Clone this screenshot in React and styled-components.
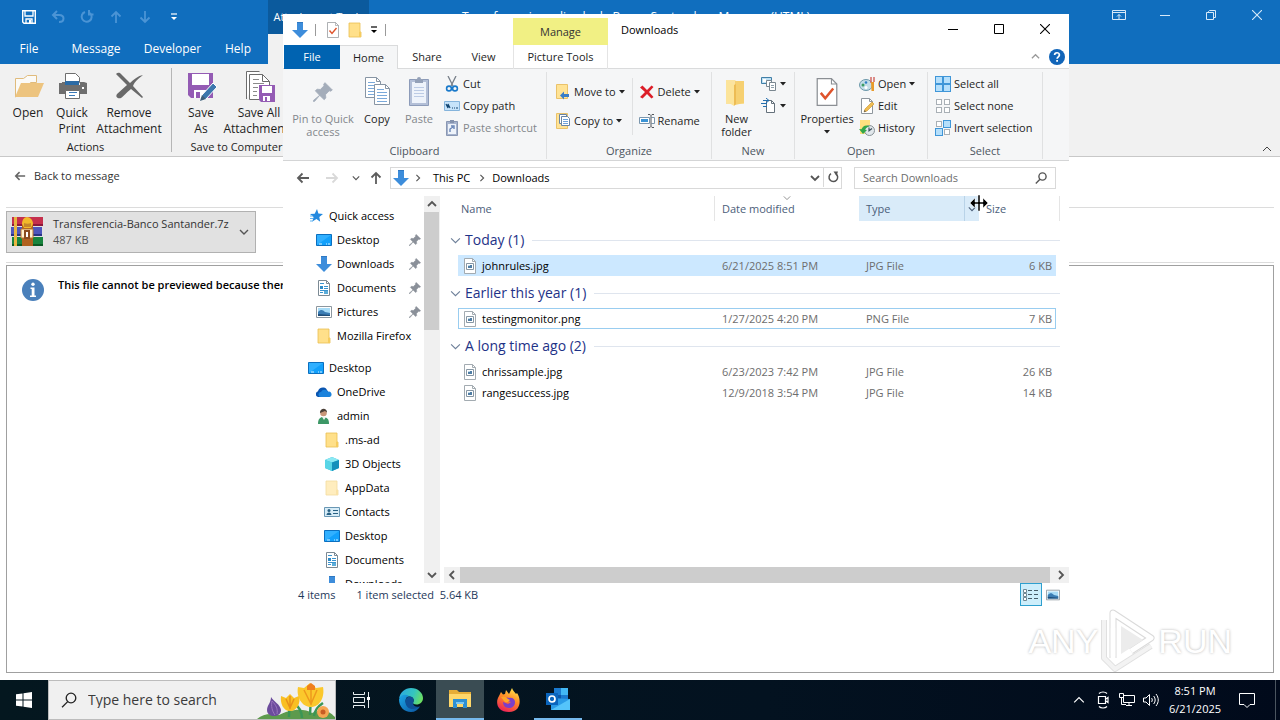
import React from "react";
import styled, { createGlobalStyle, css } from "styled-components";

const GlobalStyle = createGlobalStyle`
  *, *::before, *::after { box-sizing: border-box; }
  html, body { margin: 0; padding: 0; }
  body {
    font-family: "Open Sans", "Noto Sans", sans-serif;
    font-size: 11px;
    line-height: 16px;
    color: #1e1e1e;
    overflow: hidden;
  }
  button, input { font: inherit; color: inherit; margin: 0; padding: 0; border: 0; background: none; border-radius: 0; }
  button { cursor: default; }
  svg { display: block; flex: none; }
`;

/* ---------- icons ---------- */

const Svg = ({ w = 16, h = w, vb, children, ...rest }) => (
  <svg width={w} height={h} viewBox={vb || `0 0 ${w} ${h}`} fill="none" aria-hidden="true" {...rest}>
    {children}
  </svg>
);

const Chevron = ({ dir = "down", size = 10, color = "#555", weight = 1.4 }) => {
  const d = {
    down: "M1 3l4 4 4-4",
    up: "M1 7l4-4 4 4",
    left: "M7 1L3 5l4 4",
    right: "M3 1l4 4-4 4",
  }[dir];
  return <Svg w={size} vb="0 0 10 10"><path d={d} stroke={color} strokeWidth={weight} /></Svg>;
};
const Caret = ({ color = "#222" }) => <Svg w={6} h={4}><path d="M0 0h6L3 3.5z" fill={color} /></Svg>;
const CustomizeCaret = ({ color }) => (
  <Svg w={8} h={8}><path d="M1 1h6" stroke={color} strokeWidth="1.2" /><path d="M1 4h6L4 7z" fill={color} /></Svg>
);
const DownArrow = ({ size = 16 }) => (
  <Svg w={size} vb="0 0 16 16"><path d="M5 0h6v8h5l-8 8-8-8h5z" fill="#3d8ddb" /><path d="M5 0h6v1H5z" fill="#2f78c2" /></Svg>
);
const PinIcon = ({ size = 12, color = "#8a9099" }) => (
  <Svg w={size} vb="0 0 12 12">
    <path d="M7.2.4L11.6 4.8l-1 .7-.9-.2-2.200 2.300.2 2-1 1L4 8 1 11.600l-.7.1.1-.8L4 8 1.400 5.300l1-1 2 .2 2.200-2.200-.2-.9z" fill={color} stroke={color} strokeWidth=".5" />
  </Svg>
);
const FolderIcon = ({ size = 16, faded }) => (
  <Svg w={size} vb="0 0 16 16" opacity={faded ? 0.55 : 1}>
    <path d="M2 1h11v9h1v5H2z" fill="#ffe08a" stroke="#eabf52" strokeWidth=".8" />
    <path d="M12 10h2v5h-2z" fill="#f6cc5e" />
  </Svg>
);
const BigFolderIcon = () => (
  <Svg w={32} vb="3 0 32 32">
    <path d="M8 4h9l1 1h8v23H8z" fill="#fbe3a0" />
    <path d="M17 5h9v22l-9 2z" fill="#f6d071" />
    <path d="M8 4l8 5v21l-8-5z" fill="#fce49a" />
    <path d="M16 9v21l2-2V8z" fill="#edbc54" />
  </Svg>
);
const DesktopIcon = () => (
  <Svg><path d="M.5 2.500h15v11H.5z" fill="#12a0fb" stroke="#0b6fbf" /><path d="M1 3h14L1 13z" fill="#31b0ff" /><path d="M3 12h3M10 12h1M12 12h2" stroke="#d5f0ff" /></Svg>
);
const DocumentIcon = () => (
  <Svg>
    <path d="M2.500.5h8l3 3v12h-11z" fill="#fff" stroke="#7c8a94" /><path d="M10.500.5v3h3" stroke="#7c8a94" />
    <path d="M4 6h3v3H4z" fill="#2d8bc9" /><path d="M4 3.500h4M8 6.500h4M8 8.500h4M4 10.500h8M4 12.500h3" stroke="#3a94cf" /><path d="M8 11h4v3H8z" fill="#5cadd9" />
  </Svg>
);
const PictureIcon = ({ size = 16 }) => (
  <Svg w={size} vb="0 0 16 16">
    <path d="M.5 2.500h15v11H.5z" fill="#fff" stroke="#8c979f" /><path d="M2 4h12v8H2z" fill="#a8dcf7" />
    <path d="M2 8c3-3 5-2 7 0l5 1v3H2z" fill="#3b7db4" /><path d="M2 10l12 1v1H2z" fill="#1f4d78" />
  </Svg>
);
const ImageFileIcon = () => (
  <Svg>
    <path d="M2.500.5h8l3 3v12h-11z" fill="#fff" stroke="#a3abb1" /><path d="M10.500.5v3h3" stroke="#a3abb1" />
    <path d="M4.500 5.500h7v6h-7z" stroke="#8797a4" /><path d="M6 7h4v3H6z" fill="#4f7da4" /><path d="M6 7h2v1H6z" fill="#bcd9ea" />
  </Svg>
);
const StarIcon = () => (
  <Svg><path d="M9 1l1.400 4.600L15 6l-3.700 3 .9 4.800L8.500 11l-4.200 2.600L5.600 9 2 6l4.700-.3z" fill="#2389df" /><path d="M2 8h3M2 10.500h3M2 13h3" stroke="#61b5f3" /></Svg>
);
const OneDriveIcon = () => (
  <Svg><path d="M1 12.500a3 3 0 0 1 1-5.300A5 5 0 0 1 10 4.500L13 9l-7 4H2z" fill="#0a55b0" /><path d="M5 13a2.500 2.500 0 0 1 0-5 4 4 0 0 1 7-.3A2.700 2.700 0 0 1 13.500 13z" fill="#1b83dc" /></Svg>
);
const UserIcon = () => (
  <Svg><path d="M2 16c0-5 2-7 5-7 4 0 6 2 6 7z" fill="#3c9766" /><path d="M6 9l2 3 2-3z" fill="#eef5ef" /><circle cx="7.500" cy="5" r="3.300" fill="#c99779" /><path d="M4 5c-.5-5 7-6 7-.5L9 3z" fill="#4b4038" /></Svg>
);
const CubeIcon = () => (
  <Svg><path d="M1 4l7-3 7 3v8l-7 3-7-3z" fill="#34b9d8" /><path d="M1 4l7-3 7 3-7 2.500z" fill="#8ce9f3" /><path d="M8 6.500L15 4v8l-7 3z" fill="#1590bb" /><path d="M1 4l7 2.500V15l-7-3z" fill="#58d5e6" /></Svg>
);
const ContactIcon = () => (
  <Svg><path d="M.5 3.500h15v9H.5z" fill="#d7ecf7" stroke="#6997b4" /><circle cx="5" cy="6.500" r="1.500" fill="#286184" /><path d="M2.500 11c0-3.500 5-3.500 5 0zM9 6h5v1H9zM9 9h5v1H9z" fill="#286184" /></Svg>
);
const CheckPageIcon = ({ size = 16, vb = "0 0 16 16" }) => (
  <Svg w={size} vb={vb}><path d="M2.500.5h8l3 3v12h-11z" fill="#fff" stroke="#8b8f94" strokeWidth=".7" /><path d="M10.500.5v3h3" stroke="#8b8f94" strokeWidth=".6" /><path d="M4.500 8.500l2.500 3 4.500-5.500" stroke="#df532b" strokeWidth="1.400" /></Svg>
);
const BigCopyIcon = () => (
  <Svg w={32}>
    {[[4, 1], [13, 8]].map(([x, y]) => (
      <g key={x} transform={`translate(${x} ${y})`}>
        <path d="M.5.500h11l4 4v16H.5z" fill="#fff" stroke="#8795a4" /><path d="M11.500.5v4h4" stroke="#8795a4" />
        <path d="M3 5.500h7M3 8.500h10M3 11.500h10M3 14.500h10M3 17.500h10" stroke="#7aa9da" />
      </g>
    ))}
  </Svg>
);
const BigPasteIcon = () => (
  <Svg w={32}>
    <path d="M6.500 3.500h19v26h-19z" fill="#b3bfd7" stroke="#8c9bb9" /><path d="M9 6h14v21H9z" fill="#eef3fb" />
    <path d="M12 3h2a2 2 0 0 1 4 0h2v4h-8z" fill="#94a1b8" /><path d="M11 11.500h10M11 14.500h10M11 17.500h10M11 20.500h10" stroke="#bccbe5" />
  </Svg>
);
const CutIcon = () => (
  <Svg><path d="M4 0l5 10M12 0L7 10" stroke="#777f89" strokeWidth="1.300" /><circle cx="5" cy="12.500" r="2.400" stroke="#1979ca" strokeWidth="1.600" /><circle cx="11" cy="12.500" r="2.400" stroke="#1979ca" strokeWidth="1.600" /></Svg>
);
const CopyPathIcon = () => (
  <Svg><path d="M.5 3.500h15v9H.5z" fill="#c6e3fa" stroke="#85b4dc" /><path d="M2 6l2 4V6l2 4M8 10h1M10 10h1M12 10h2" stroke="#124571" strokeWidth="1.200" /></Svg>
);
const PasteShortcutIcon = () => (
  <Svg><path d="M2.500 1.500h11v14h-11z" fill="#a6b3cd" stroke="#8997b3" /><path d="M4 4h8v10H4z" fill="#eef3fa" /><path d="M6 0h4v3H6z" fill="#8492ad" /><path d="M6 12V9l3-2M7 6h3v3" stroke="#6a86b7" strokeWidth="1.400" /></Svg>
);
const MoveToIcon = () => (
  <Svg><path d="M1.500.5h11v14h-11z" fill="#ffe395" stroke="#eac26a" /><path d="M5 11.500l4-4v2.500h5v3H9v2.500z" fill="#3a7ec7" /></Svg>
);
const CopyToIcon = () => (
  <Svg><path d="M1.500.5h11v15h-11z" fill="#ffe395" stroke="#eac26a" /><path d="M4.500 1.500h7v9h-7z" fill="#fff" stroke="#6884a4" /><path d="M6.500 3.500h6l2 2v7h-8z" fill="#fff" stroke="#6884a4" /><path d="M8 6.500h5M8 8.500h5M8 10.500h5" stroke="#6fa3da" /></Svg>
);
const DeleteIcon = () => (
  <Svg><path d="M1 3.500L3.500 1.500 8 6l4.500-4.500L14.500 3 10 8l4.500 5-2 1.500L8 10l-4.500 4.500L1 13l5-5z" fill="#dc1e28" /></Svg>
);
const RenameIcon = () => (
  <Svg><path d="M.5 4.500h10v6H.5zM12.500 4.500h3v6h-3" fill="#fff" stroke="#7b96ad" /><path d="M2 6h7v3H2z" fill="#3c94d5" /><path d="M9 1.500h2l1 1 1-1h2M9 14.500h2l1-1 1 1h2M12 2.500v11" stroke="#50565d" /></Svg>
);
const NewItemIcon = () => (
  <Svg><path d="M.5 1.500h10v6H.5z" fill="#bfe0f3" stroke="#417fa7" /><path d="M2 3h3v3H2z" fill="#fff" /><path d="M5.500 4.500h5v6h-5z" fill="#fff" stroke="#7a8790" /><path d="M8.500 6.500h6v8h-6z" fill="#fff" stroke="#7a8790" /><path d="M10 9.500h3M10 11.500h3" stroke="#8fa0ab" /></Svg>
);
const EasyAccessIcon = () => (
  <Svg><path d="M5.500 2.500h5l3 3v9h-8z" fill="#fff" stroke="#65717b" /><path d="M10.500 2.500v3h3" stroke="#65717b" /><path d="M2 2.500h6M0 5.500h6M2 8.500h4" stroke="#256fae" /><path d="M5 0l3 2.500L5 5" stroke="#256fae" /></Svg>
);
const OpenWithIcon = () => (
  <Svg><ellipse cx="7" cy="9" rx="6.500" ry="5.500" fill="#c3dde8" stroke="#6c98aa" /><circle cx="4" cy="9" r="1.500" fill="#3c9d63" /><circle cx="7" cy="6.500" r="1.300" fill="#2f7dc4" /><circle cx="7" cy="11.500" r="1.500" fill="#fff" /><path d="M12 1v6M15 1v5" stroke="#d0605a" strokeWidth="1.400" /><path d="M12 6h3v9h-2.500z" fill="#e99b2c" /></Svg>
);
const EditIcon = () => (
  <Svg><path d="M2.500.5h8l3 3v12h-11z" fill="#fff" stroke="#8e969d" /><path d="M10.500.5v3h3" stroke="#8e969d" /><path d="M5 14l1-3 7-7 2 2-7 7z" fill="#f0bd52" stroke="#c9922a" strokeWidth=".6" /><path d="M5 14l.6-2 1.400 1.400z" fill="#555" /></Svg>
);
const HistoryIcon = () => (
  <Svg><path d="M1 0h10v14H1z" fill="#ffe07f" /><circle cx="10.500" cy="10.500" r="5" fill="#e1e7eb" stroke="#879196" /><path d="M10 7.500v3.300l3-2.300" stroke="#3e5360" strokeWidth="1.200" /><path d="M0 9l4 5 4-4-2-.3c1-2 2.500-3 5-3.200C7 4.500 4 5.500 2.500 9.300z" fill="#34a749" /></Svg>
);
const SelectIcon = ({ cells }) => (
  <Svg>
    {[[0, 0], [8, 0], [0, 8], [8, 8]].map(([x, y], i) => {
      const on = cells[i] === "1";
      return <rect key={i} x={x + (on ? 0.5 : 1.5)} y={y + (on ? 0.5 : 1.5)} width={on ? 7 : 5} height={on ? 7 : 5} fill={on ? "#b5dffb" : "#fff"} stroke={on ? "#3f96d8" : "#a9b0b6"} />;
    })}
  </Svg>
);
const HelpIcon = () => (
  <Svg w={16}><circle cx="8" cy="8" r="8" fill="#1165b9" /><path d="M5.600 6.100C5.600 2.900 10.400 3 10.400 6c0 1.700-2.300 1.900-2.300 3.700" stroke="#fff" strokeWidth="1.700" /><path d="M7.200 11h1.800v1.800H7.200z" fill="#fff" /></Svg>
);
const NavArrow = ({ dir, color = "#5c5c5c", size = 14 }) => {
  const deg = { left: 0, up: 90, right: 180, down: 270 }[dir];
  return <Svg w={size} vb="0 0 14 14"><g transform={`rotate(${deg} 7 7)`} stroke={color} strokeWidth="1.800"><path d="M1.500 7H13M6.500 2.500L2 7l4.500 4.500" /></g></Svg>;
};
const RefreshIcon = () => <Svg w={12}><path d="M9 2.800A4.300 4.300 0 1 1 4 2.600" stroke="#555" strokeWidth="1.500" /><path d="M6.500.5H11L9.500 5z" fill="#555" /></Svg>;
const SearchIcon = ({ size = 12, color = "#555", weight = 1.4 }) => (
  <Svg w={size} vb="0 0 12 12"><circle cx="7.500" cy="4.500" r="3.600" stroke={color} strokeWidth={weight} /><path d="M5 7.200L.8 11.400" stroke={color} strokeWidth={weight} /></Svg>
);
const MinimizeIcon = ({ color }) => <Svg w={10}><path d="M0 5.500h10" stroke={color} /></Svg>;
const MaximizeIcon = ({ color }) => <Svg w={10}><path d="M.5.500h9v9h-9z" stroke={color} /></Svg>;
const RestoreIcon = ({ color }) => <Svg w={10}><path d="M.5 2.500h7v7h-7z" stroke={color} /><path d="M2.500 2.500v-1l1-1h6v7h-2" stroke={color} /></Svg>;
const CloseIcon = ({ color }) => <Svg w={10}><path d="M0 0l10 10M10 0L0 10" stroke={color} strokeWidth="1.100" /></Svg>;
const RibbonDisplayIcon = () => <Svg w={14} h={12}><path d="M.5 1.500h13v9H.5zM.5 3.500h13" stroke="#d7e9f9" /><path d="M7 10V5.500M5 7.500l2-2 2 2" stroke="#d7e9f9" /></Svg>;
const DetailsViewIcon = () => (
  <Svg w={18} h={14}>
    {[1, 5, 9].map((y) => <g key={y}><path d={`M1.500 ${y + 0.5}h3v3h-3z`} fill="#fff" stroke="#718894" /><path d={`M6 ${y + 1.5}h4M12 ${y + 1.5}h4`} stroke="#465c68" /></g>)}
  </Svg>
);
const FloppyIcon = () => (
  <Svg w={14}><path d="M.7.700h12.600v12.600H2L.7 12z" stroke="#fff" strokeWidth="1.400" /><path d="M3 1v5h8V1M4 13V9h6v4" stroke="#fff" strokeWidth="1.300" /><path d="M7 10h2v3H7z" fill="#fff" /></Svg>
);
const UndoIcon = () => <Svg w={14}><path d="M6 1L2 5l4 4M2 5h6c6 0 6 7 0 7" stroke="#4b94d5" strokeWidth="2" /></Svg>;
const RedoIcon = () => <Svg w={14}><path d="M10 3a5 5 0 1 1-5-1M9 0v4.500h4.500" stroke="#4b94d5" strokeWidth="2" /></Svg>;
const OpenFolderIcon = () => (
  <Svg w={32}><path d="M3.500 27V8.500h8l4-3h9v7h-6z" fill="#fbfaf7" stroke="#e0bb7c" /><path d="M9 13h23l-6 14H3z" fill="#edc47f" /></Svg>
);
const PrinterIcon = () => (
  <Svg w={32}>
    <path d="M9.500 3.500h10l4 4v5h-14z" fill="#fff" stroke="#6e6e6e" /><path d="M3 13h3v-1h4v3h14v-3h4l3 1v11H3z" fill="#6e6e6e" /><path d="M9 11h14v4H9z" fill="#2c6ba5" />
    <path d="M9.500 20.500h14v8h-14z" fill="#fff" stroke="#6e6e6e" /><path d="M13 22.500h8M13 25.500h6" stroke="#3b7ab8" /><path d="M26 17h2v2h-2z" fill="#fff" />
  </Svg>
);
const RemoveIcon = () => (
  <Svg w={32}><path d="M3 4c2-2 4-1 5 0l9 9C21 9 25 6 30 5c-5 4-8 6-10 11l10 11-1 1-11-9c-5 4-7 7-10 9-3 1-6-1-4-4l10-9z" fill="#696969" /></Svg>
);
const SaveAsIcon = () => (
  <Svg w={32}><path d="M3 3h25v25H6l-3-3z" fill="#945bb4" /><path d="M7 4h17v11H7zM9 20h12v8H9z" fill="#fff" /><path d="M11 22h4v6h-4z" fill="#945bb4" /><path d="M15 31l2-6L28 13l4 4-11 12z" fill="#3d78ad" stroke="#fff" /><path d="M15 31l2-6 4 4z" fill="#3e5e78" /></Svg>
);
const SaveAllIcon = () => (
  <Svg w={32}>
    <path d="M3.500 29V1.500h13M6.500 4.500h13l7 7v18h-20z" fill="#fff" stroke="#6c6c6c" /><path d="M19.500 4.500v7h7" stroke="#6c6c6c" />
    <path d="M10 9.500h6M10 13.500h11M10 17.500h5M10 21.500h4M10 25.500h4" stroke="#8a8a8a" /><path d="M16 15h16v17H18l-2-2z" fill="#945bb4" /><path d="M19 16h10v7H19zM20 26h7v5h-7z" fill="#fff" /><path d="M22 27h2v4h-2z" fill="#945bb4" />
  </Svg>
);
const ArchiveIcon = () => (
  <Svg w={32}>
    <path d="M1 1h31v9H1z" fill="#c5304d" /><path d="M0 11h31v9H0z" fill="#4d56bd" /><path d="M1 21h31v9H1z" fill="#18843e" />
    <path d="M1 8h31v2H1z" fill="#8d1839" /><path d="M0 18h31v2H0z" fill="#283384" /><path d="M1 28h31v2H1z" fill="#0b5924" />
    <path d="M3 1h3v29H3z" fill="#e7b540" /><path d="M11 8h11v22H11z" fill="#b0611f" /><path d="M11 8c0-4 2-7 5-7s6 3 6 7l-2 4h-7z" fill="#f2b92b" />
    <path d="M13 7c2 1 5 1 7 0v4h-7z" fill="#c5872c" /><path d="M10 13h12v9H10z" fill="#fff1cf" stroke="#b9752a" /><path d="M13 14h6v9h-6z" fill="#8a4b20" /><path d="M15 16h2v5h-2z" fill="#fff" />
  </Svg>
);
const InfoIcon = () => (
  <Svg w={22}><circle cx="11" cy="11" r="11" fill="#4a80bb" /><circle cx="11" cy="5.300" r="1.700" fill="#fff" /><path d="M8.500 8.500h4v8H14v1.500H8v-1.500h1.700V10H8.500z" fill="#fff" /></Svg>
);
const WindowsLogo = () => <Svg w={16}><path d="M0 2.300l6.500-.9v6.100H0zM7.500 1.200L16 0v7.500H7.500zM0 8.500h6.500v6.100L0 13.700zM7.500 8.500H16V16l-8.500-1.200z" fill="#fff" /></Svg>;
const TaskViewIcon = () => <Svg w={18} h={16}><path d="M1.500 0v2.500h11V0M1.500 5.500h11v5h-11zM1.500 16v-2.500h11V16M16.500 0v16" stroke="#e8eef0" /><path d="M15 5h3v3h-3z" fill="#fff" /></Svg>;
const EdgeIcon = () => (
  <Svg w={24}>
    <defs>
      <linearGradient id="edgeTop" x1="0" y1="0" x2="24" y2="10" gradientUnits="userSpaceOnUse"><stop stopColor="#2aa6e6" /><stop offset=".6" stopColor="#35c5be" /><stop offset="1" stopColor="#6ee05e" /></linearGradient>
      <linearGradient id="edgeBody" x1="2" y1="8" x2="18" y2="24" gradientUnits="userSpaceOnUse"><stop stopColor="#1ba0e2" /><stop offset="1" stopColor="#0c59a4" /></linearGradient>
    </defs>
    <path d="M0 11C1 4 6 0 12 0c7 0 12 5 12 10 0 4-3 6.500-6.500 6.500-3 0-4-1.200-3.300-2.300 1.300-2.500 0-5.700-3.700-5.700C6 8.500 1 8 0 11z" fill="url(#edgeTop)" />
    <path d="M0 11.500C1 7 6 5.500 10 8c-3 1-4 4-3 7 1.500 5 8 6 14 3.500C19 22 16 24 12 24 5 24 0 18.500 0 11.500z" fill="url(#edgeBody)" />
    <path d="M10.500 8.500C6 9 5 15 8.500 19c3 3 8.500 2.500 12.500-.5-4 1-7-.5-7-3.500 1.500-2 1-6.500-3.500-6.500z" fill="#0f4f96" />
  </Svg>
);
const ExplorerAppIcon = () => (
  <Svg w={24}><path d="M1 3h8l2 2h12v15H1z" fill="#e7ad36" /><path d="M1 7h22v13H1z" fill="#ffd76a" /><path d="M5 12h14v9h-4v-4H9v4H5z" fill="#2d8fd3" /><path d="M8 15h8v2H8z" fill="#7cc6f3" /></Svg>
);
const FirefoxIcon = () => (
  <Svg w={24}>
    <defs><linearGradient id="foxFire" x1="18" y1="1" x2="7" y2="24" gradientUnits="userSpaceOnUse"><stop stopColor="#ffe34b" /><stop offset=".45" stopColor="#ff8a26" /><stop offset="1" stopColor="#ed1f59" /></linearGradient></defs>
    <path d="M4 4l2 2.500L8 6l1-4 3 4 3-6c1 3 3 4 4 6l1-1c4 5 5 19-8 19C0 24-2 14 2 8z" fill="url(#foxFire)" />
    <path d="M7 12c1-3 4-3 5-2 3-1 6 1 6 4 0 4-3 6-6 6-4 0-6-3-6-6l5 2 3-2-4-1z" fill="#7b3fc9" /><path d="M4 9c2-1 5-1 7 2l2 1-2 2c-2 1-3 0-4-1z" fill="#ffa629" />
  </Svg>
);
const OutlookIcon = () => (
  <Svg w={24}><path d="M8 1h14v14H8z" fill="#1a7ad0" /><path d="M15 1h7v7h-7z" fill="#42b8f5" /><path d="M8 8h7v7H8z" fill="#0d56a5" /><path d="M5 11l19 1v11H5z" fill="#2a9be7" /><path d="M5 23L24 12v11z" fill="#55c4fa" /><path d="M0 6h12v12H0z" fill="#0a65bd" /><circle cx="6" cy="12" r="3" stroke="#fff" strokeWidth="1.700" /></Svg>
);
const FlowersArt = () => (
  <Svg w={78} h={38}>
    <path d="M0 38c6-5 13-6 22-4 9-5 24-8 33-2 11-5 17-2 23 4v2z" fill="#5d9a4d" />
    <path d="M32 36c0-9 1-12 2-15M53 34c0-10 1-14 2-18M45 37c0-8-4-12-8-15M57 35c1-8 6-11 9-13" stroke="#3a9656" strokeWidth="2.500" />
    <path d="M14 16c3 5 9 7 10 13 0 8-14 8-14 0 0-5 4-7 4-13z" fill="#6c4c9c" /><path d="M15 20c-1 5 0 10 3 14M15 20c4 4 6 8 5 13" stroke="#9b75bf" />
    <path d="M24 15l5 2 4-4 4 4 5-2c2 7-2 15-9 15s-10-8-9-15z" fill="#f9bf22" /><path d="M29 18l4 9 4-9M33 15v13" stroke="#e8901a" strokeWidth="1.500" />
    <path d="M41 6l6 1 6-5 6 5 7-1c2 10-3 20-12 20S39 16 41 6z" fill="#fbc82c" /><path d="M47 9l7 14 6-14M54 5v19" stroke="#ee991c" strokeWidth="1.500" /><path d="M50 5l4-3 4 3v4h-8z" fill="#ef7f1d" />
    <circle cx="66" cy="31" r="6" fill="#f5a552" /><circle cx="66" cy="31" r="2.500" fill="#c85c24" />
  </Svg>
);
const CameraTrayIcon = () => <Svg w={14} h={18}><path d="M2.500 5.500h7v7h-7zM10 8l2-1.500v5L10 10M3 2.500c2-2 6-2 8 0M3 15.500c2 2 6 2 8 0" stroke="#fff" strokeWidth="1.200" /></Svg>;
const NetworkIcon = () => <Svg w={16}><path d="M4.500 3.500h11v7h-11zM7 13.500h6M10 10.500v3M.5 1.500h4v4h-4zM2.500 5.500v7H7" stroke="#fff" /></Svg>;
const VolumeIcon = () => <Svg w={16}><path d="M.5 6v4H3l3.500 3.500v-11L3 6zM8.500 6c1 1 1 3 0 4M10.700 4c2 2.500 2 5.500 0 8M13 2c3 4 3 8 0 12" stroke="#fff" /></Svg>;
const NoticeIcon = () => <Svg w={16}><path d="M.5 1.500h15v11H11l-3 3-3-3H.5z" stroke="#fff" /></Svg>;
const PlayMark = () => (
  <Svg w={56} h={66}>
    <g strokeLinejoin="round"><path d="M13 50V5l38 25-20 13" stroke="#dadada" strokeWidth="7" /><path d="M4 12v38l11 11 36-23M13 20v28" stroke="#e0e0e0" strokeWidth="6" /><path d="M13 50V5l38 25-20 13" stroke="#fff" strokeWidth="5" /><path d="M4 12v38l11 11 36-23" stroke="#f3f3f3" strokeWidth="4" /><path d="M21 18v28l22-14z" fill="#ececec" /></g>
  </Svg>
);
const ResizeCursor = () => <Svg w={18} h={16}><path d="M0 8l5-5v4h3V0h2v7h3V3l5 5-5 5V9h-3v7H8V9H5v4z" fill="#000" stroke="#fff" strokeWidth=".5" /></Svg>;

/* ---------- desktop and mail window ---------- */

const Desktop = styled.div`
  position: relative;
  min-height: 100vh;
  display: flex;
  flex-direction: column;
  background: #fff;
`;
const MailWindow = styled.section`flex: 1; display: flex; flex-direction: column;`;
const MailTitleBar = styled.header`
  display: flex; align-items: stretch; height: 34px; color: #fff; background: #106ebe;
`;
const QuickBar = styled.div`
  display: flex; align-items: center; width: 268px; padding-left: 14px;
`;
const QuickButton = styled.button`
  width: 29px; height: 28px; display: grid; place-items: center;
`;
const ToolsCaption = styled.div`
  width: 101px; background: #0b5a9d; text-align: center; line-height: 33px;
`;
const MailTitle = styled.div`flex: 1; line-height: 33px; font-size: 12px; padding-left: 93px;`;
const WindowControls = styled.div`display: flex; margin-left: auto; padding-right: ${(p) => p.$inset || 0}px;`;
const ControlButton = styled.button`width: 46px; height: 30px; display: grid; place-items: center;`;
const MailTabs = styled.nav`display: flex; height: 30px; color: #fff; background: #106ebe;`;
const MailTab = styled.button`
  width: ${(p) => p.$w}px; font-size: 12px; text-align: center;
`;
const ActiveMailTab = styled.button`width: 101px; margin-left: auto; background: #f1f1f1;`;
const TabGroup = styled.div`display: flex; width: 369px; padding-left: 3px;`;
const MailRibbon = styled.div`
  display: flex; height: 93px; background: #f1f1f1; border-bottom: 1px solid #c8c8c8;
`;
const MailGroup = styled.div`
  display: flex; flex-direction: column; justify-content: space-between; margin-top: 4px;
  width: ${(p) => p.$w}px; height: 84px; border-right: 1px solid #b6b6b6;
`;
const MailButtons = styled.div`display: flex; padding-left: ${(p) => p.$pad}px;`;
const MailButton = styled.button`
  width: ${(p) => p.$w}px; display: flex; flex-direction: column; align-items: center;
  font-size: 12px; line-height: 16px; white-space: nowrap;
  & > svg { margin: 2px 0 3px; }
`;
const MailCaption = styled.div`text-align: center; line-height: 10px;`;
const CollapseButton = styled.button`margin: auto 8px 2px auto; padding: 0;`;
const BackRow = styled.div`height: 50px; padding: 10px 14px; `;
const BackButton = styled.button`display: flex; align-items: center; gap: 8px; height: 18px; color: #333;`;
const AttachmentBar = styled.div`
  margin: 0 6px; height: 56px; padding: 3px 0; border: solid #dcdcdc; border-width: 1px 0;
`;
const AttachmentChip = styled.button`
  display: flex; align-items: center; gap: 10px; width: 250px; height: 42px; padding: 0 8px 0 4px;
  border: 1px solid #b1b1b1; background: #e1e1e1; text-align: left; line-height: 16px; white-space: nowrap; color: #333;
  & > span { flex: 1; }
`;
const AttachmentSize = styled.small`display: block; font-size: 11px; color: #555;`;
const Preview = styled.div`
  flex: 1; display: flex; gap: 14px; margin: 2px 6px 7px; padding: 13px 15px; border: 1px solid #a0a0a0;
  color: #000; font-weight: 600; line-height: 12px;
`;

/* ---------- explorer window ---------- */

const ExplorerWindow = styled.section`
  position: absolute; top: 14px; left: 283px; right: 211px; height: 592px;
  display: flex; flex-direction: column; background: #fff; color: #1e1e1e;
`;
const TitleRow = styled.header`display: flex; height: 31px;`;
const ExplorerQuick = styled.div`display: flex; align-items: center; width: 230px; padding-left: 9px;`;
const IconButton = styled.button`
  width: ${(p) => p.$w || 22}px; height: 22px; display: grid; place-items: center;
`;
const QuickDivider = styled.i`width: 1px; height: 12px; margin: 0 4px 0 ${(p) => p.$before}px; background: #9a9a9a;`;
const ManageTab = styled.div`width: 95px; margin-top: 4px; background: #f1f084; text-align: center; line-height: 28px; color: #333;`;
const ExplorerTitle = styled.h1`margin: 0; padding-left: 13px; font-size: 11px; font-weight: 400; line-height: 32px; color: #000;`;
const TabRow = styled.nav`display: flex; height: 24px; border-bottom: 1px solid #dadbdc;`;
const ExplorerTab = styled.button`
  width: ${(p) => p.$w}px; height: 24px; text-align: center;
  ${(p) => p.$kind === "file" && css`margin-left: 1px; background: #0063b1; color: #fff;`}
  ${(p) => p.$kind === "active" && css`background: #f5f6f7; border: solid #dadbdc; border-width: 1px 1px 0 0;`}
  ${(p) => p.$kind === "tools" && css`margin-left: 2px; border: solid #e4e4e4; border-width: 0 1px;`}
`;
const TabExtras = styled.div`display: flex; align-items: center; gap: 9px; margin-left: auto; padding-right: 4px;`;
const Ribbon = styled.div`display: flex; height: 92px; padding: 3px 0 1px; background: #f5f6f7; border-bottom: 1px solid #d4d5d6;`;
const RibbonGroup = styled.div`
  display: flex; flex-direction: column; width: ${(p) => p.$w}px; border-right: 1px solid #e0e1e2;
  & > :last-child { margin-top: auto; }
`;
const RibbonBody = styled.div`display: flex; padding: ${(p) => p.$pad || "0"};`;
const BigButton = styled.button`
  width: ${(p) => p.$w}px; display: flex; flex-direction: column; align-items: center; padding-top: 4px;
  line-height: 13px; color: ${(p) => (p.$dim ? "#83878c" : "inherit")}; white-space: nowrap;
  & > svg { margin-bottom: 4px; }
  & > svg + svg { margin: 5px 0 0; }
`;
const Stack = styled.div`
  display: flex; flex-direction: column; gap: ${(p) => p.$gap || 0}px; padding: ${(p) => p.$pad || "0"};
  ${(p) => p.$line && css`border-left: 1px solid #e0e1e2;`}
`;
const SmallButton = styled.button`
  display: flex; align-items: center; gap: 3px; height: 22px; white-space: nowrap; text-align: left;
  color: ${(p) => (p.$dim ? "#83878c" : "inherit")};
`;
const RibbonCaption = styled.div`text-align: center; line-height: 16px; color: #4c5560;`;

const AddressRow = styled.div`display: flex; align-items: center; height: 35px; padding: 0 13px 1px 9px;`;
const AddressBox = styled.div`
  flex: 1; display: flex; align-items: center; height: 22px; padding-left: 2px; border: 1px solid #d9d9d9; color: #000;
`;
const Crumb = styled.a`color: inherit; text-decoration: none; padding: 0 8px 0 6px;`;
const RefreshButton = styled.button`width: 18px; height: 20px; display: grid; place-items: center; border-left: 1px solid #d9d9d9;`;
const SearchBox = styled.label`
  display: flex; align-items: center; width: 202px; height: 22px; margin-left: 12px; padding: 0 8px; border: 1px solid #d9d9d9;
  & > input { flex: 1; min-width: 0; outline: 0; }
  & > input::placeholder { color: #6d6d6d; opacity: 1; }
`;
const Body = styled.div`flex: 1; min-height: 0; display: flex; overflow: hidden;`;
const Tree = styled.ul`
  width: 141px; margin: 0; padding: 8px 0 0 25px; list-style: none; overflow: hidden; color: #000;
`;
const TreeItem = styled.li`
  display: flex; align-items: center; gap: 5px; height: 24px; white-space: nowrap;
  padding: 0 3px 0 ${(p) => p.$level * 8}px; margin-top: ${(p) => (p.$gap ? 8 : 0)}px;
  & > span { flex: 1; }
`;
const VerticalBar = styled.div`width: 16px; display: flex; flex-direction: column; justify-content: space-between; background: #f0f0f0;`;
const HorizontalBar = styled.div`display: flex; height: 16px; background: #f0f0f0;`;
const ScrollButton = styled.button`width: 16px; height: 16px; display: grid; place-items: center;`;
const VerticalTrack = styled.div`flex: 1;`;
const VerticalThumb = styled.div`height: 118px; margin-right: 1px; background: #cdcdcd;`;
const HorizontalThumb = styled.div`flex: 1; margin-right: 3px; background: #cdcdcd;`;
const FilePane = styled.div`flex: 1; display: flex; flex-direction: column; margin-left: 4px; min-width: 0;`;
const FileArea = styled.div`flex: 1; padding-right: 9px;`;
const FileTable = styled.table`width: 100%; table-layout: fixed; border-collapse: separate; border-spacing: 0; color: #6d6d6d;`;
const Col = styled.col`width: ${(p) => (p.$w ? `${p.$w}px` : "auto")};`;
const HeadCell = styled.th`
  height: 25px; padding: 0 0 0 ${(p) => p.$pad || 0}px; text-align: left; font-weight: 400; color: #4c607a; position: relative;
  border-right: ${(p) => (p.$line ? "1px solid #e5e5e5" : "0")};
  ${(p) => p.$hot && css`background: #d9ebf9;`}
`;
const SortMark = styled.span`position: absolute; top: -2px; left: 68px;`;
const TypeMenu = styled.button`
  position: absolute; top: 0; right: 0; width: 15px; height: 25px; display: grid; place-items: center; border-left: 1px solid #b9d3e8;
`;
const GroupCell = styled.td`padding: 0; height: ${(p) => (p.$first ? 34 : 32)}px;`;
const GroupLine = styled.div`
  display: flex; align-items: center; gap: 4px; padding: ${(p) => (p.$first ? 4 : 2)}px 0 0 6px; font-size: 14px; line-height: 20px; color: #1e3287;
  &::after { content: ""; flex: 1; height: 1px; margin-left: 4px; background: #dfe5ee; }
`;
const FileRow = styled.tr`
  & > td { height: 21px; padding: 0 0 0 7px; }
  & > td:nth-child(2) { padding-left: 4px; color: #000; }
  & > td:nth-child(5) { padding: 0 4px 0 0; text-align: right; }
  & > td:first-child, & > td:last-child { padding: 0; }
  ${(p) => p.$state === "selected" && css`& > td:not(:first-child):not(:last-child) { background: #cce8ff; }`}
  ${(p) => p.$state === "focused" && css`
    & > td:not(:first-child):not(:last-child) { border: solid #99cdf0; border-width: 1px 0; }
    && > td:nth-child(2):not(:last-child) { border-left-width: 1px; padding-left: 3px; }
    && > td:nth-child(5):not(:last-child) { border-right-width: 1px; padding-right: 3px; }
  `}
`;
const FileName = styled.div`display: flex; align-items: center; gap: 4px; height: 19px;`;
const StatusBar = styled.footer`
  display: flex; align-items: center; gap: 21px; height: 23px; padding: 0 5px 0 15px; color: #1e395b;
`;
const ViewSwitch = styled.div`display: flex; margin-left: auto;`;
const ViewButton = styled.button`
  width: 22px; height: 23px; display: grid; place-items: center;
  ${(p) => p.$on && css`background: #cdeefb; border: 1px solid #2ea0cf;`}
`;
const CursorLayer = styled.div`position: absolute; top: 195px; left: 970px;`;
const Watermark = styled.div`
  position: absolute; right: 48px; bottom: 46px; display: flex; align-items: center; gap: 2px;
  font: 34px/66px "Liberation Sans", sans-serif; color: #fff; text-shadow: 0 0 3px #b5b5b5;
`;

/* ---------- taskbar ---------- */

const Taskbar = styled.footer`display: flex; height: 40px; background: linear-gradient(90deg, #04171f, #031220 60%, #010a1b); color: #fff;`;
const TaskButton = styled.button`
  width: ${(p) => p.$w || 48}px; height: 40px; display: grid; place-items: center;
  background: ${(p) => (p.$active ? "#3a4c53" : "transparent")};
  ${(p) => p.$running && css`border-bottom: 2px solid #76b9ed;`}
`;
const TaskSearch = styled.label`
  display: flex; align-items: center; gap: 11px; width: 288px; padding-left: 12px; background: #f0f0f0; border: 1px solid #bcbcbc; color: #333;
  & > input { flex: 1; min-width: 0; font-size: 14px; outline: 0; }
  & > input::placeholder { color: #3b3b3b; opacity: 1; }
`;
const AppList = styled.div`display: flex; gap: 1px;`;
const Tray = styled.div`display: flex; margin-left: auto;`;
const Clock = styled.time`width: 64px; text-align: center; padding-top: 2px; line-height: 18px;`;
const ShowDesktop = styled.button`width: 5px; height: 40px; margin-left: 8px; border-left: 1px solid #4b555f;`;

/* ---------- data ---------- */

const treeItems = [
  ["Quick access", StarIcon, 0],
  ["Desktop", DesktopIcon, 1, "pin"],
  ["Downloads", DownArrow, 1, "pin"],
  ["Documents", DocumentIcon, 1, "pin"],
  ["Pictures", PictureIcon, 1, "pin"],
  ["Mozilla Firefox", FolderIcon, 1],
  ["Desktop", DesktopIcon, 0, "gap"],
  ["OneDrive", OneDriveIcon, 1],
  ["admin", UserIcon, 1],
  [".ms-ad", FolderIcon, 2],
  ["3D Objects", CubeIcon, 2],
  ["AppData", () => <FolderIcon faded />, 2],
  ["Contacts", ContactIcon, 2],
  ["Desktop", DesktopIcon, 2],
  ["Documents", DocumentIcon, 2],
  ["Downloads", DownArrow, 2],
];

const fileGroups = [
  { title: "Today (1)", files: [["johnrules.jpg", "6/21/2025 8:51 PM", "JPG File", "6 KB", "selected"]] },
  { title: "Earlier this year (1)", files: [["testingmonitor.png", "1/27/2025 4:20 PM", "PNG File", "7 KB", "focused"]] },
  {
    title: "A long time ago (2)",
    files: [
      ["chrissample.jpg", "6/23/2023 7:42 PM", "JPG File", "26 KB"],
      ["rangesuccess.jpg", "12/9/2018 3:54 PM", "JPG File", "14 KB"],
    ],
  },
];

/* ---------- views ---------- */

const Mail = () => (
  <MailWindow>
    <MailTitleBar>
      <QuickBar>
        <QuickButton aria-label="Save"><FloppyIcon /></QuickButton>
        <QuickButton aria-label="Undo"><UndoIcon /></QuickButton>
        <QuickButton aria-label="Redo"><RedoIcon /></QuickButton>
        <QuickButton aria-label="Previous"><NavArrow dir="up" color="#4b94d5" /></QuickButton>
        <QuickButton aria-label="Next"><NavArrow dir="down" color="#4b94d5" /></QuickButton>
        <QuickButton aria-label="Customize"><CustomizeCaret color="#fff" /></QuickButton>
      </QuickBar>
      <ToolsCaption>Attachment Tools</ToolsCaption>
      <MailTitle>Transferencia realizada de Banco Santander - Message (HTML)</MailTitle>
      <WindowControls>
        <ControlButton aria-label="Ribbon display"><RibbonDisplayIcon /></ControlButton>
        <ControlButton aria-label="Minimize"><MinimizeIcon color="#d7e9f9" /></ControlButton>
        <ControlButton aria-label="Restore"><RestoreIcon color="#d7e9f9" /></ControlButton>
        <ControlButton aria-label="Close"><CloseIcon color="#d7e9f9" /></ControlButton>
      </WindowControls>
    </MailTitleBar>
    <MailTabs>
      <TabGroup>
        <MailTab $w={52}>File</MailTab>
        <MailTab $w={82}>Message</MailTab>
        <MailTab $w={71}>Developer</MailTab>
        <MailTab $w={60}>Help</MailTab>
        <ActiveMailTab aria-label="Attachments" />
      </TabGroup>
    </MailTabs>
    <MailRibbon>
      <MailGroup $w={172}>
        <MailButtons $pad={6}>
          <MailButton $w={44}><OpenFolderIcon />Open</MailButton>
          <MailButton $w={44}><PrinterIcon />Quick<br />Print</MailButton>
          <MailButton $w={70}><RemoveIcon />Remove<br />Attachment</MailButton>
        </MailButtons>
        <MailCaption>Actions</MailCaption>
      </MailGroup>
      <MailGroup $w={130}>
        <MailButtons $pad={7}>
          <MailButton $w={44}><SaveAsIcon />Save<br />As</MailButton>
          <MailButton $w={72}><SaveAllIcon />Save All<br />Attachments</MailButton>
        </MailButtons>
        <MailCaption>Save to Computer</MailCaption>
      </MailGroup>
      <CollapseButton aria-label="Collapse ribbon"><Chevron dir="up" color="#444" weight={1} /></CollapseButton>
    </MailRibbon>
    <BackRow><BackButton><NavArrow dir="left" color="#666" size={12} />Back to message</BackButton></BackRow>
    <AttachmentBar>
      <AttachmentChip>
        <ArchiveIcon />
        <span>Transferencia-Banco Santander.7z<AttachmentSize>487 KB</AttachmentSize></span>
        <Chevron />
      </AttachmentChip>
    </AttachmentBar>
    <Preview>
      <InfoIcon />
      <span>This file cannot be previewed because there</span>
    </Preview>
  </MailWindow>
);

const ExplorerRibbon = () => (
  <Ribbon>
    <RibbonGroup $w={264}>
      <RibbonBody $pad="0 0 0 5px">
        <BigButton $w={70} $dim><Svg w={32} vb="-6 -6 32 32"><PinIcon size={20} color="#a4adba" /></Svg>Pin to Quick<br />access</BigButton>
        <BigButton $w={38}><BigCopyIcon />Copy</BigButton>
        <BigButton $w={46} $dim><BigPasteIcon />Paste</BigButton>
        <Stack $pad="1px 0 0 2px">
          <SmallButton><CutIcon />Cut</SmallButton>
          <SmallButton><CopyPathIcon />Copy path</SmallButton>
          <SmallButton $dim><PasteShortcutIcon />Paste shortcut</SmallButton>
        </Stack>
      </RibbonBody>
      <RibbonCaption>Clipboard</RibbonCaption>
    </RibbonGroup>
    <RibbonGroup $w={165}>
      <RibbonBody $pad="6px 0 0 8px">
        <Stack $gap={7} $pad="3px 7px 3px 0">
          <SmallButton><MoveToIcon />Move to <Caret /></SmallButton>
          <SmallButton><CopyToIcon />Copy to <Caret /></SmallButton>
        </Stack>
        <Stack $gap={7} $pad="3px 0 3px 6px" $line>
          <SmallButton><DeleteIcon />Delete <Caret /></SmallButton>
          <SmallButton><RenameIcon />Rename</SmallButton>
        </Stack>
      </RibbonBody>
      <RibbonCaption>Organize</RibbonCaption>
    </RibbonGroup>
    <RibbonGroup $w={83}>
      <RibbonBody>
        <BigButton $w={49}><BigFolderIcon />New<br />folder</BigButton>
        <Stack $pad="1px 0 0">
          <SmallButton aria-label="New item"><NewItemIcon /><Caret /></SmallButton>
          <SmallButton aria-label="Easy access"><EasyAccessIcon /><Caret /></SmallButton>
        </Stack>
      </RibbonBody>
      <RibbonCaption>New</RibbonCaption>
    </RibbonGroup>
    <RibbonGroup $w={133}>
      <RibbonBody>
        <BigButton $w={64}><CheckPageIcon size={32} vb="-1 -1 18 18" />Properties<Caret /></BigButton>
        <Stack $pad="1px 0 0">
          <SmallButton><OpenWithIcon />Open <Caret /></SmallButton>
          <SmallButton><EditIcon />Edit</SmallButton>
          <SmallButton><HistoryIcon />History</SmallButton>
        </Stack>
      </RibbonBody>
      <RibbonCaption>Open</RibbonCaption>
    </RibbonGroup>
    <RibbonGroup $w={115}>
      <RibbonBody>
        <Stack $pad="1px 0 0 7px">
          <SmallButton><SelectIcon cells="1111" />Select all</SmallButton>
          <SmallButton><SelectIcon cells="0000" />Select none</SmallButton>
          <SmallButton><SelectIcon cells="0110" />Invert selection</SmallButton>
        </Stack>
      </RibbonBody>
      <RibbonCaption>Select</RibbonCaption>
    </RibbonGroup>
  </Ribbon>
);

const FileList = () => (
  <FileTable>
    <colgroup>
      <Col $w={14} /><Col /><Col $w={144} /><Col $w={120} /><Col $w={77} /><Col $w={4} />
    </colgroup>
    <thead>
      <tr>
        <HeadCell />
        <HeadCell $pad={3} $line>Name</HeadCell>
        <HeadCell $pad={7}>Date modified<SortMark><Chevron size={8} color="#777" weight={1} /></SortMark></HeadCell>
        <HeadCell $pad={7} $hot>Type<TypeMenu aria-label="Filter by type"><Chevron size={8} color="#4c607a" /></TypeMenu></HeadCell>
        <HeadCell $pad={7}>Size</HeadCell>
        <HeadCell $line />
      </tr>
    </thead>
    {fileGroups.map((g, i) => (
      <tbody key={g.title}>
        <tr><GroupCell colSpan={6} $first={i === 0}><GroupLine $first={i === 0}><Chevron size={11} color="#6d7f99" weight={1} />{g.title}</GroupLine></GroupCell></tr>
        {g.files.map(([name, date, type, size, state]) => (
          <FileRow key={name} $state={state}>
            <td /><td><FileName><ImageFileIcon />{name}</FileName></td><td>{date}</td><td>{type}</td><td>{size}</td><td />
          </FileRow>
        ))}
      </tbody>
    ))}
  </FileTable>
);

const Explorer = () => (
  <ExplorerWindow>
    <TitleRow>
      <ExplorerQuick>
        <DownArrow />
        <QuickDivider $before={7} />
        <IconButton $w={26} aria-label="Properties"><CheckPageIcon /></IconButton>
        <IconButton $w={18} aria-label="New folder"><FolderIcon /></IconButton>
        <IconButton $w={20} aria-label="Customize"><CustomizeCaret color="#000" /></IconButton>
        <QuickDivider $before={1} />
      </ExplorerQuick>
      <ManageTab>Manage</ManageTab>
      <ExplorerTitle>Downloads</ExplorerTitle>
      <WindowControls $inset={1}>
        <ControlButton aria-label="Minimize"><MinimizeIcon color="#000" /></ControlButton>
        <ControlButton aria-label="Maximize"><MaximizeIcon color="#000" /></ControlButton>
        <ControlButton aria-label="Close"><CloseIcon color="#000" /></ControlButton>
      </WindowControls>
    </TitleRow>
    <TabRow>
      <ExplorerTab $w={56} $kind="file">File</ExplorerTab>
      <ExplorerTab $w={58} $kind="active">Home</ExplorerTab>
      <ExplorerTab $w={58}>Share</ExplorerTab>
      <ExplorerTab $w={55}>View</ExplorerTab>
      <ExplorerTab $w={95} $kind="tools">Picture Tools</ExplorerTab>
      <TabExtras><Chevron dir="up" size={9} color="#999" /><HelpIcon /></TabExtras>
    </TabRow>
    <ExplorerRibbon />
    <AddressRow>
      <IconButton aria-label="Back"><NavArrow dir="left" /></IconButton>
      <IconButton $w={36} aria-label="Forward"><NavArrow dir="right" color="#d9d9d9" /></IconButton>
      <IconButton $w={12} aria-label="Recent locations"><Chevron size={8} /></IconButton>
      <IconButton $w={28} aria-label="Up"><NavArrow dir="up" /></IconButton>
      <AddressBox>
        <DownArrow /><IconButton $w={18} aria-label="Locations"><Chevron dir="right" size={8} /></IconButton>
        <Crumb href="#pc">This PC</Crumb><Chevron dir="right" size={8} />
        <Crumb href="#downloads">Downloads</Crumb>
        <WindowControls>
          <IconButton $w={16} aria-label="Previous locations"><Chevron weight={1.8} /></IconButton>
          <RefreshButton aria-label="Refresh"><RefreshIcon /></RefreshButton>
        </WindowControls>
      </AddressBox>
      <SearchBox><input type="text" aria-label="Search Downloads" placeholder="Search Downloads" /><SearchIcon /></SearchBox>
    </AddressRow>
    <Body>
      <Tree>
        {treeItems.map(([label, Icon, level, extra], i) => (
          <TreeItem key={i} $level={level} $gap={extra === "gap"}><Icon /><span>{label}</span>{extra === "pin" && <PinIcon />}</TreeItem>
        ))}
      </Tree>
      <VerticalBar>
        <ScrollButton aria-label="Scroll up"><Chevron dir="up" weight={1.8} /></ScrollButton>
        <VerticalTrack><VerticalThumb /></VerticalTrack>
        <ScrollButton aria-label="Scroll down"><Chevron weight={1.8} /></ScrollButton>
      </VerticalBar>
      <FilePane>
        <FileArea><FileList /></FileArea>
        <HorizontalBar>
          <ScrollButton aria-label="Scroll left"><Chevron dir="left" weight={1.8} /></ScrollButton>
          <HorizontalThumb />
          <ScrollButton aria-label="Scroll right"><Chevron dir="right" weight={1.8} /></ScrollButton>
        </HorizontalBar>
      </FilePane>
    </Body>
    <StatusBar>
      <span>4 items</span><span>1 item selected&nbsp; 5.64 KB</span>
      <ViewSwitch>
        <ViewButton $on aria-label="Details view"><DetailsViewIcon /></ViewButton>
        <ViewButton aria-label="Large icons view"><PictureIcon size={14} /></ViewButton>
      </ViewSwitch>
    </StatusBar>
  </ExplorerWindow>
);

export default function App() {
  return (
    <>
      <GlobalStyle />
      <Desktop>
        <Mail />
        <Explorer />
        <CursorLayer><ResizeCursor /></CursorLayer>
        <Watermark><span>ANY</span><PlayMark /><span>RUN</span></Watermark>
        <Taskbar>
          <TaskButton aria-label="Start"><WindowsLogo /></TaskButton>
          <TaskSearch>
            <SearchIcon size={16} color="#222" weight={1} />
            <input type="text" aria-label="Type here to search" placeholder="Type here to search" />
            <FlowersArt />
          </TaskSearch>
          <AppList>
            <TaskButton $w={50} aria-label="Task view"><TaskViewIcon /></TaskButton>
            <TaskButton aria-label="Edge"><EdgeIcon /></TaskButton>
            <TaskButton aria-label="File Explorer" $active $running><ExplorerAppIcon /></TaskButton>
            <TaskButton aria-label="Firefox"><FirefoxIcon /></TaskButton>
            <TaskButton aria-label="Outlook" $running><OutlookIcon /></TaskButton>
          </AppList>
          <Tray>
            <TaskButton $w={24} aria-label="Hidden icons"><Chevron dir="up" size={12} color="#fff" weight={1} /></TaskButton>
            <TaskButton $w={24} aria-label="Meet now"><CameraTrayIcon /></TaskButton>
            <TaskButton $w={24} aria-label="Network"><NetworkIcon /></TaskButton>
            <TaskButton $w={24} aria-label="Volume"><VolumeIcon /></TaskButton>
            <Clock>8:51 PM<br />6/21/2025</Clock>
            <TaskButton $w={40} aria-label="Notifications"><NoticeIcon /></TaskButton>
            <ShowDesktop aria-label="Show desktop" />
          </Tray>
        </Taskbar>
      </Desktop>
    </>
  );
}
